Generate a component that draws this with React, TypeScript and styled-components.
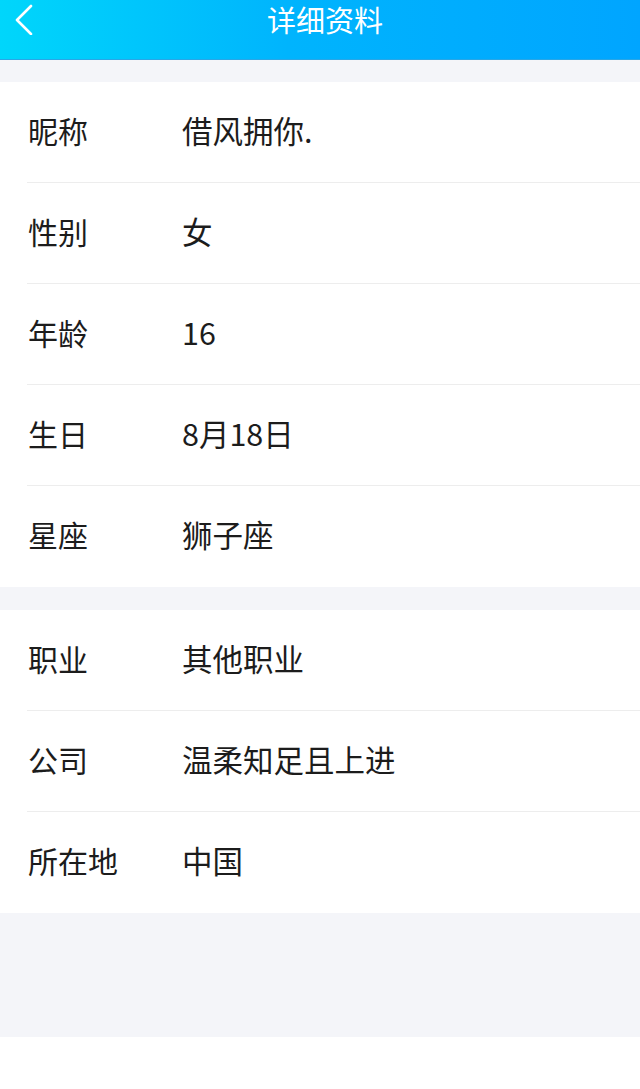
import React from 'react'
import styled, { createGlobalStyle } from 'styled-components'

const GlobalStyle = createGlobalStyle`
  html, body {
    margin: 0;
    padding: 0;
    background: #ffffff;
  }
  body {
    font-family: "Noto Sans CJK SC", "Noto Sans", sans-serif;
  }
`

const Page = styled.div`
  width: 640px;
  min-height: 1089px;
  display: flex;
  flex-direction: column;
  background: #ffffff;
`

const Header = styled.div`
  height: 60px;
  box-sizing: border-box;
  background: linear-gradient(90deg, #00d6fb 0%, #00b4fd 45%, #00a5ff 100%);
  border-bottom: 1px solid #2aa6e6;
  display: grid;
  grid-template-columns: 60px 1fr 60px;
  align-items: start;
`

const BackButton = styled.div`
  height: 38px;
  display: flex;
  align-items: center;
  padding-left: 14px;
`

const Title = styled.div`
  height: 38px;
  line-height: 38px;
  text-align: center;
  color: #ffffff;
  font-size: 29px;
  padding-left: 10px;
`

const Gap = styled.div<{ $h: number }>`
  height: ${p => p.$h}px;
  background: #f4f5f9;
`

const Card = styled.div`
  background: #ffffff;
  display: flex;
  flex-direction: column;
`

const Row = styled.div`
  height: 101px;
  display: flex;
  align-items: center;
  margin-left: 27px;
  padding-bottom: 5px;
  box-sizing: border-box;
  border-bottom: 1px solid #ededed;
  &:last-child {
    border-bottom: none;
  }
`

const Label = styled.span`
  width: 154px;
  font-size: 30px;
  color: #1c1c1c;
  padding-left: 1px;
`

const Value = styled.span`
  font-size: 30.5px;
  color: #1c1c1c;
`

const basic = [
  ['昵称', '借风拥你.'],
  ['性别', '女'],
  ['年龄', '16'],
  ['生日', '8月18日'],
  ['星座', '狮子座'],
]

const work = [
  ['职业', '其他职业'],
  ['公司', '温柔知足且上进'],
  ['所在地', '中国'],
]

const Section = ({ items }: { items: string[][] }) => (
  <Card>
    {items.map(([k, v]) => (
      <Row key={k}>
        <Label>{k}</Label>
        <Value>{v}</Value>
      </Row>
    ))}
  </Card>
)

export default function App() {
  return (
    <Page>
      <GlobalStyle />
      <Header>
        <BackButton>
          <svg width="20" height="32" viewBox="0 0 20 32">
            <path
              d="M17 3 L3 17 L17 31"
              fill="none"
              stroke="#ffffff"
              strokeWidth="2.6"
              strokeLinecap="round"
              strokeLinejoin="round"
            />
          </svg>
        </BackButton>
        <Title>详细资料</Title>
        <div />
      </Header>
      <Gap $h={22} />
      <Section items={basic} />
      <Gap $h={23} />
      <Section items={work} />
      <Gap $h={124} />
    </Page>
  )
}
